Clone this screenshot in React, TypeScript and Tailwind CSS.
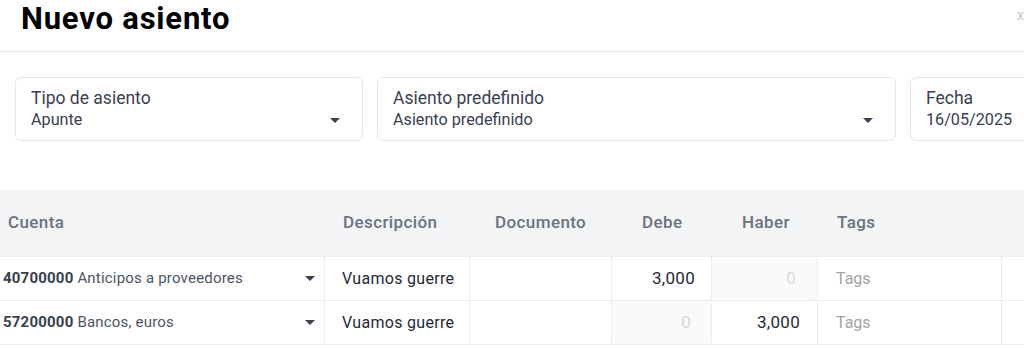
import React from 'react';

const Caret = ({ className = '' }: { className?: string }) => (
    <svg width="10" height="5" viewBox="0 0 10 5" className={className}>
        <path d="M0 0 L10 0 L5 5 Z" fill="currentColor" />
    </svg>
);

interface SelectBoxProps {
    label: string;
    value: string;
    width: string;
    caret?: boolean;
}

function SelectBox({ label, value, width, caret = true }: SelectBoxProps) {
    return (
        <div className={`${width} shrink-0 h-[64px] rounded-[6px] border border-[#e5e7eb] bg-white pl-[15px] pr-[22px] flex items-end justify-between`}>
            <div className="flex flex-col text-[#374151] pb-[9px]">
                <span className="text-[17.5px] leading-[22px]">{label}</span>
                <span className="text-[16.2px] leading-[22px]">{value}</span>
            </div>
            {caret && <Caret className="text-[#374151] mb-[17px]" />}
        </div>
    );
}

const cols = 'grid grid-cols-[325px_145px_142px_100px_106px_184px_1fr]';

const rows = [
    { code: '40700000', name: 'Anticipos a proveedores', debe: '3,000', haber: '0', debeOff: false },
    { code: '57200000', name: 'Bancos, euros', debe: '0', haber: '3,000', debeOff: true },
];

export default function App() {
    return (
        <div className="w-[1024px] h-[350px] overflow-hidden bg-white relative" style={{ fontFamily: 'Roboto, "Liberation Sans", sans-serif' }}>
            {/* Header */}
            <div className="h-[52px] border-b border-[#e8e8e8] pl-[21px] pt-[1px]">
                <h1 className="text-[31px] font-bold text-black leading-[36px] tracking-[0.8px]">Nuevo asiento</h1>
            </div>
            <span className="absolute right-0 top-[5px] text-[14px] text-[#c8c8c8]">x</span>

            {/* Form */}
            <div className="flex gap-[14px] pl-[15px] pt-[25px]">
                <SelectBox label="Tipo de asiento" value="Apunte" width="w-[348px]" />
                <SelectBox label="Asiento predefinido" value="Asiento predefinido" width="w-[519px]" />
                <SelectBox label="Fecha" value="16/05/2025" width="w-[200px]" caret={false} />
            </div>

            {/* Table */}
            <div className="mt-[49px]">
                <div className={`${cols} h-[67px] bg-[#f3f4f6] border-b border-[#ececec] items-center text-[17px] font-medium tracking-[0.4px] text-[#6b7280]`}>
                    <div className="pl-[8px]">Cuenta</div>
                    <div className="pl-[18px]">Descripción</div>
                    <div className="pl-[25px]">Documento</div>
                    <div className="pl-[30px]">Debe</div>
                    <div className="pl-[30px]">Haber</div>
                    <div className="pl-[19px]">Tags</div>
                    <div />
                </div>
                {rows.map((r) => (
                    <div key={r.code} className={`${cols} h-[44px] border-b border-[#ececec]`}>
                        <div className="flex items-center justify-between pl-[3px] pr-[9px] border-r border-[#ececec] text-[15px] text-[#4b5563] tracking-[0.2px]">
                            <span>
                                <span className="font-bold text-[#374151]">{r.code}</span> {r.name}
                            </span>
                            <Caret className="text-[#374151]" />
                        </div>
                        <div className="flex items-center pl-[17px] border-r border-[#ececec] text-[16px] tracking-[0.3px] text-[#1f2937] overflow-hidden whitespace-nowrap">
                            Vuamos guerre
                        </div>
                        <div className="border-r border-[#ececec]" />
                        <div className={`flex items-center justify-end border-r border-[#ececec] text-[17px] tracking-[0.3px] ${r.debeOff ? 'bg-[#fafafa] rounded-[4px] text-[#d9d9d9] pr-[20px]' : 'text-[#1f2937] pr-[16px]'}`}>
                            {r.debe}
                        </div>
                        <div className={`flex items-center justify-end border-r border-[#ececec] text-[17px] tracking-[0.3px] ${!r.debeOff ? 'bg-[#fafafa] rounded-[4px] text-[#d9d9d9] pr-[21px]' : 'text-[#1f2937] pr-[17px]'}`}>
                            {r.haber}
                        </div>
                        <div className="flex items-center pl-[18px] border-r border-[#ececec] text-[16px] text-[#a3a3a3]">
                            Tags
                        </div>
                        <div />
                    </div>
                ))}
            </div>
        </div>
    );
}
